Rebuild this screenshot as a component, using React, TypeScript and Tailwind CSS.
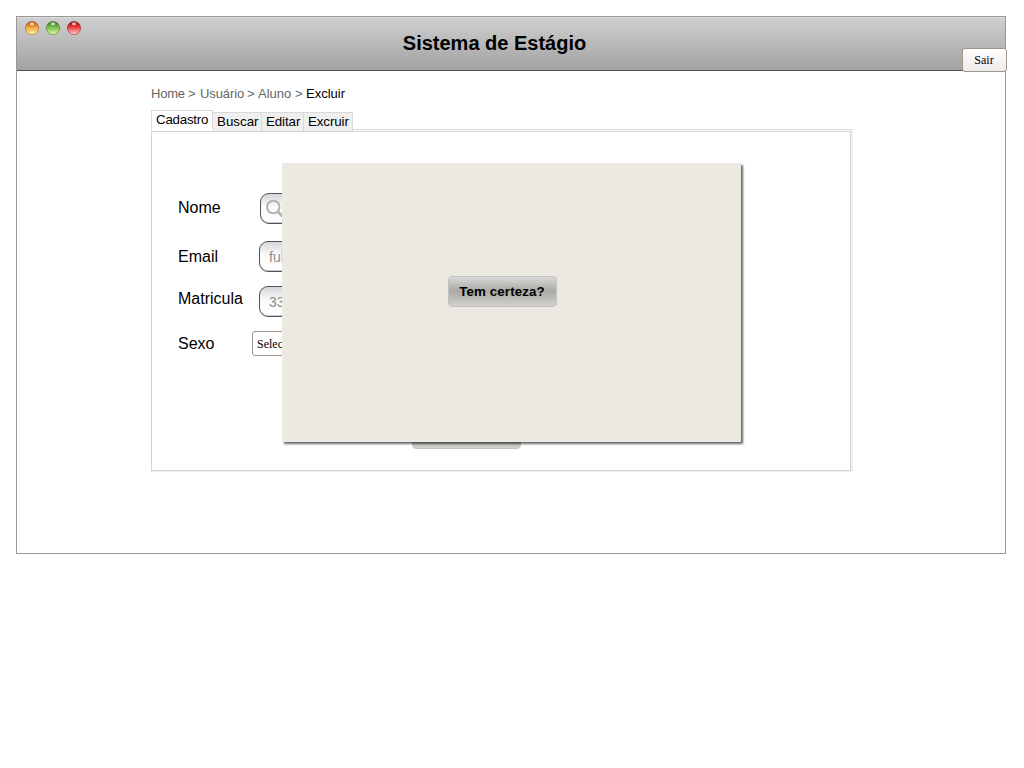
import React from 'react';

type Field = {
  label: string;
  row: string;
  labelClass: string;
  control: React.ReactNode;
};

const inputClass =
  'flex h-[31px] w-[180px] items-center rounded-[9px] border border-[#50535a] bg-linear-to-b from-[#d5d6d9] via-[#fbfbfb] via-45% to-white text-[14px] text-[#8b8b8b] shadow-[inset_0_-1px_0_#c9cace]';

const fields: Field[] = [
  {
    label: 'Nome',
    row: 'mt-[61px] h-[30px]',
    labelClass: 'w-[82px] pt-1',
    control: (
      <div className={inputClass}>
        <svg className="ml-1 h-5 w-5" viewBox="0 0 20 20" fill="none" stroke="#b3b3b3">
          <circle cx="8.3" cy="8" r="6.2" strokeWidth="2.1" />
          <path d="M12.7 12.6 L18 18" strokeWidth="2.8" />
        </svg>
      </div>
    ),
  },
  {
    label: 'Email',
    row: 'mt-[18px] h-[30px]',
    labelClass: 'w-[81px] pt-[5px]',
    control: (
      <div className={inputClass}>
        <span className="ml-[9px] pt-px">fulano@email.com</span>
      </div>
    ),
  },
  {
    label: 'Matricula',
    row: 'mt-[15px] h-[30px]',
    labelClass: 'w-[81px] pt-0.5',
    control: (
      <div className={inputClass}>
        <span className="ml-[9px] pt-px">333333</span>
      </div>
    ),
  },
  {
    label: 'Sexo',
    row: 'mt-[15px] h-[25px]',
    labelClass: 'w-[74px] pt-0.5',
    control: (
      <div className="flex h-[25px] w-[110px] items-center rounded-[3px] border border-[#a1958a] bg-white pl-1 font-['Liberation_Serif',serif] text-[12px]">
        Selecione
      </div>
    ),
  },
];

const buttonClass =
  'flex h-[31px] w-[109px] items-center justify-center rounded-[4px] border border-[#c2c2c2] bg-linear-to-b from-[#d9d9d8] via-[#aaa9a6] via-48% to-[#d2d1ce] text-[13.33px] font-bold';

function WindowControls() {
  const lights = [
    { id: 'amber', top: '#a83b0d', mid: '#eea03b', low: '#fff58c' },
    { id: 'green', top: '#2d6718', mid: '#72b94b', low: '#d8f69b' },
    { id: 'red', top: '#760b0e', mid: '#e93535', low: '#ffc4c4' },
  ];
  return (
    <div className="absolute top-[3px] left-[7px] flex gap-[5px]">
      {lights.map((l) => (
        <svg key={l.id} className="h-4 w-4" viewBox="0 0 16 16">
          <defs>
            <linearGradient id={l.id} x1="0" y1="0" x2="0" y2="1">
              <stop offset="0" stopColor={l.top} />
              <stop offset="0.4" stopColor={l.mid} />
              <stop offset="0.95" stopColor={l.low} />
            </linearGradient>
          </defs>
          <circle cx="8" cy="8" r="6.6" fill={`url(#${l.id})`} stroke={l.top} strokeOpacity="0.6" strokeWidth="0.8" />
          <ellipse cx="8" cy="3.8" rx="2.3" ry="1.5" fill="#fff" fillOpacity="0.65" />
        </svg>
      ))}
    </div>
  );
}

export default function App() {
  return (
    <div className="h-[768px] w-[1024px] overflow-hidden bg-white p-4 font-['Liberation_Sans',Arial,sans-serif] text-black">
      <div className="relative h-[538px] w-[990px] border border-[#999]">
        <header className="relative flex h-[54px] justify-center border-b border-[#515151] bg-linear-to-b from-[#d0d0d0] to-[#a2a2a2] shadow-[inset_0_1px_0_#dedede]">
          <WindowControls />
          <h1 className="mt-[11px] mr-[33px] text-[20px] leading-[30px] font-bold">Sistema de Estágio</h1>
          <button className="absolute top-[31px] -right-[2px] h-6 w-[45px] rounded-[3px] border border-[#a1958a] bg-linear-to-b from-white via-[#f4f4f4] to-[#ececec] pr-px font-['Liberation_Serif',serif] text-[12px] leading-[22px]">
            Sair
          </button>
        </header>

        <main className="ml-[134px] w-[702px]">
          <nav className="flex h-[39px] pt-[13px] text-[13px] leading-[20px] whitespace-pre text-[#666]">
            <span className="w-[37px] tracking-[-0.2px]">Home</span>
            <span className="w-3">&gt;</span>
            <span className="w-[47px] tracking-[-0.1px]">Usuário</span>
            <span className="w-[11px]">&gt;</span>
            <span className="w-[37px]">Aluno</span>
            <span className="w-[11px]">&gt;</span>
            <span className="text-black">Excluir</span>
          </nav>
          <div className="flex h-5 items-end text-[13.33px] leading-[18px]">
            <div className="h-5 w-[62px] border border-b-0 border-[#d8d8d8] bg-white pl-1 tracking-[-0.24px]">Cadastro</div>
            <div className="-mb-px h-[19px] w-[49px] border-t border-r border-[#d8d8d8] bg-[#efefef] pl-1">Buscar</div>
            <div className="-mb-px h-[19px] w-[42px] border-t border-r border-[#d8d8d8] bg-[#efefef] pl-1 tracking-[-0.1px]">Editar</div>
            <div className="-mb-px h-[19px] w-[49px] border-t border-r border-[#d8d8d8] bg-[#efefef] pl-1 tracking-[-0.1px]">Excruir</div>
            <div className="h-px flex-1 bg-[#dcdcdc]" />
          </div>
          <section className="mt-px h-[341px] border-r-2 border-b border-[#efefef]">
            <div className="flex h-[340px] flex-col border border-[#d3d3d3] pl-[26px]">
              {fields.map((f) => (
                <div key={f.label} className={`flex shrink-0 ${f.row}`}>
                  <label className={`shrink-0 text-[16px] leading-[22px] ${f.labelClass}`}>{f.label}</label>
                  {f.control}
                </div>
              ))}
              <button className={`mt-[62px] ml-[234px] shrink-0 ${buttonClass}`}>Excluir</button>
            </div>
          </section>
        </main>

        <div
          role="dialog"
          className="absolute top-[146px] left-[265px] flex h-[279px] w-[459px] bg-[#ece9e2] pt-[113px] pl-[166px] shadow-[2px_2px_2px_rgba(0,0,0,0.6)]"
        >
          <button className={buttonClass}>
            <span className="-ml-px tracking-[0.1px]">Tem certeza?</span>
          </button>
        </div>
      </div>
    </div>
  );
}
